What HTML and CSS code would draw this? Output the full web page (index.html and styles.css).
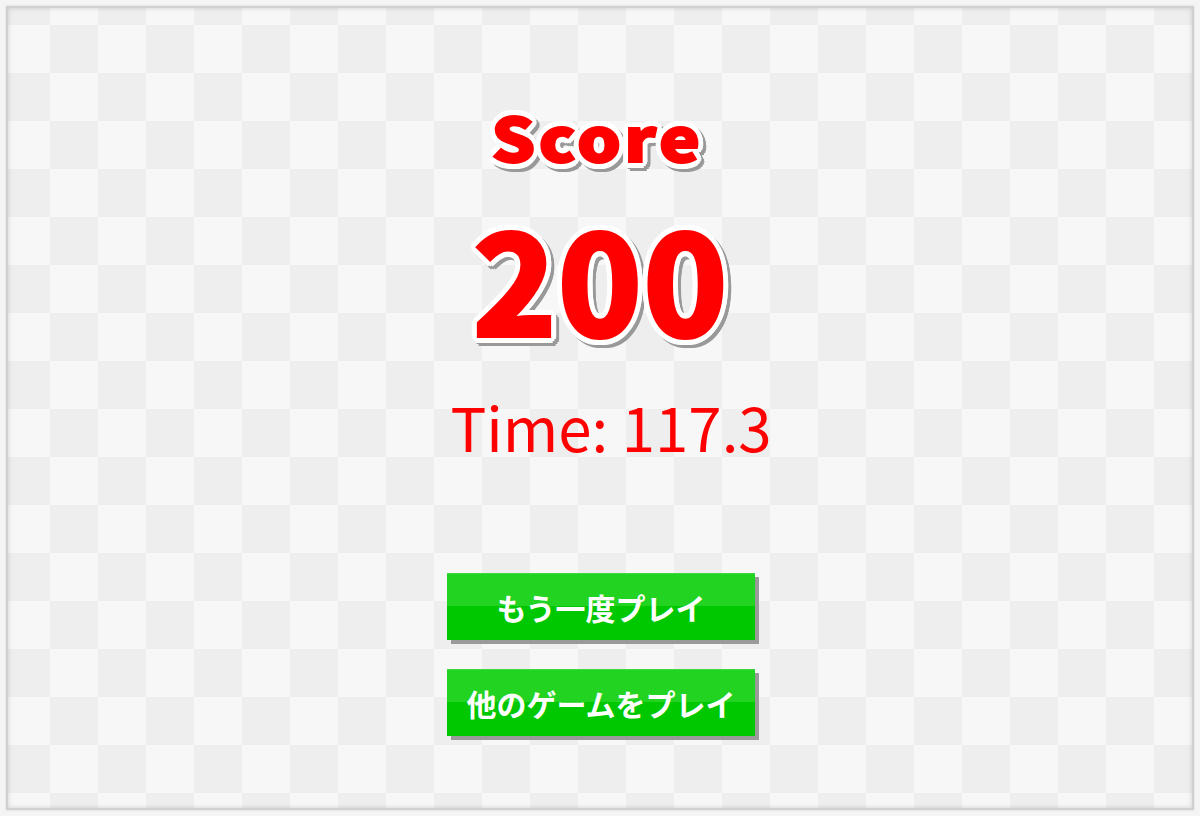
FILE: index.html
```html
<!DOCTYPE html>
<html lang="ja">
<head>
<meta charset="utf-8">
<title>Result</title>
<link rel="stylesheet" href="styles.css">
</head>
<body>
<div class="frame">
  <main class="stage">
    <div class="score-label outlined">Score</div>
    <div class="score-value outlined">200</div>
    <div class="time">Time: 117.3</div>
    <div class="buttons">
      <button class="btn" type="button">もう一度プレイ</button>
      <button class="btn" type="button">他のゲームをプレイ</button>
    </div>
  </main>
</div>
</body>
</html>
```

FILE: styles.css
```css
html, body {
  margin: 0;
  padding: 0;
  background: #f4f4f4;
}

body {
  font-family: "Noto Sans CJK JP", "Noto Sans", sans-serif;
}

.frame {
  margin: 6px;
  width: 1184px;
  height: 800px;
  border: 2px solid #d0d0d0;
  background-color: #f7f7f7;
  background-image: repeating-conic-gradient(#eeeeee 0 25%, #f7f7f7 0 50%);
  background-size: 96px 96px;
  background-position: -54px -31px;
  box-shadow: inset 0 0 5px rgba(0, 0, 0, 0.16), 0 0 2px rgba(0, 0, 0, 0.12);
}

.stage {
  box-sizing: border-box;
  height: 100%;
  padding-top: 98px;
  display: flex;
  flex-direction: column;
  align-items: center;
}

.outlined {
  color: #ff0000;
  -webkit-text-stroke: 2px #ff0000;
  text-shadow:
    6px 0 0 #fff, 5.54px 2.3px 0 #fff, 4.24px 4.24px 0 #fff, 2.3px 5.54px 0 #fff,
    0 6px 0 #fff, -2.3px 5.54px 0 #fff, -4.24px 4.24px 0 #fff, -5.54px 2.3px 0 #fff,
    -6px 0 0 #fff, -5.54px -2.3px 0 #fff, -4.24px -4.24px 0 #fff, -2.3px -5.54px 0 #fff,
    0 -6px 0 #fff, 2.3px -5.54px 0 #fff, 4.24px -4.24px 0 #fff, 5.54px -2.3px 0 #fff,
    3px 0 0 #fff, 2.1px 2.1px 0 #fff, 0 3px 0 #fff, -2.1px 2.1px 0 #fff,
    -3px 0 0 #fff, -2.1px -2.1px 0 #fff, 0 -3px 0 #fff, 2.1px -2.1px 0 #fff,
    9px 3px 0 #999, 8.54px 5.3px 0 #999, 7.24px 7.24px 0 #999, 5.3px 8.54px 0 #999,
    3px 9px 0 #999, 0.7px 8.54px 0 #999, -1.24px 7.24px 0 #999, 8.54px 0.7px 0 #999,
    7.24px -1.24px 0 #999, 6px 6px 0 #999, 3px 3px 0 #999, 6px 3px 0 #999, 3px 6px 0 #999;
}

.score-label {
  font-size: 60px;
  font-weight: 900;
  line-height: 60px;
  letter-spacing: 3px;
  margin-bottom: 40px;
  margin-right: 6px;
  transform: scaleX(1.15);
  text-shadow:
    5.22px 0 0 #fff, 4.82px 2.3px 0 #fff, 3.69px 4.24px 0 #fff, 2px 5.54px 0 #fff,
    0 6px 0 #fff, -2px 5.54px 0 #fff, -3.69px 4.24px 0 #fff, -4.82px 2.3px 0 #fff,
    -5.22px 0 0 #fff, -4.82px -2.3px 0 #fff, -3.69px -4.24px 0 #fff, -2px -5.54px 0 #fff,
    0 -6px 0 #fff, 2px -5.54px 0 #fff, 3.69px -4.24px 0 #fff, 4.82px -2.3px 0 #fff,
    2.61px 0 0 #fff, 1.83px 2.1px 0 #fff, 0 3px 0 #fff, -1.83px 2.1px 0 #fff,
    -2.61px 0 0 #fff, -1.83px -2.1px 0 #fff, 0 -3px 0 #fff, 1.83px -2.1px 0 #fff,
    7.83px 3px 0 #999, 7.43px 5.3px 0 #999, 6.3px 7.24px 0 #999, 4.61px 8.54px 0 #999,
    2.61px 9px 0 #999, 0.61px 8.54px 0 #999, -1.08px 7.24px 0 #999, 7.43px 0.7px 0 #999,
    6.3px -1.24px 0 #999, 5.22px 6px 0 #999, 2.61px 3px 0 #999, 5.22px 3px 0 #999, 2.61px 6px 0 #999;
}

.score-value {
  font-size: 140px;
  font-weight: 900;
  line-height: 140px;
  margin-bottom: 50px;
}

.time {
  font-size: 60px;
  font-weight: 400;
  line-height: 60px;
  color: #ff0000;
  margin-bottom: 117px;
  margin-left: 22px;
}

.buttons {
  display: flex;
  flex-direction: column;
  gap: 29px;
  margin-left: 2px;
}

.btn {
  width: 308px;
  height: 67px;
  padding: 0;
  border: none;
  border-top: 1px solid #3fd83f;
  font-family: "Noto Sans CJK JP", sans-serif;
  font-size: 30px;
  font-weight: 700;
  line-height: 1;
  color: #ffffff;
  background: linear-gradient(#22d322 0, #22d322 49%, #00c800 49%, #00c800 100%);
  box-shadow: 4px 4px 0 #9a9a9a;
  cursor: pointer;
}
```
